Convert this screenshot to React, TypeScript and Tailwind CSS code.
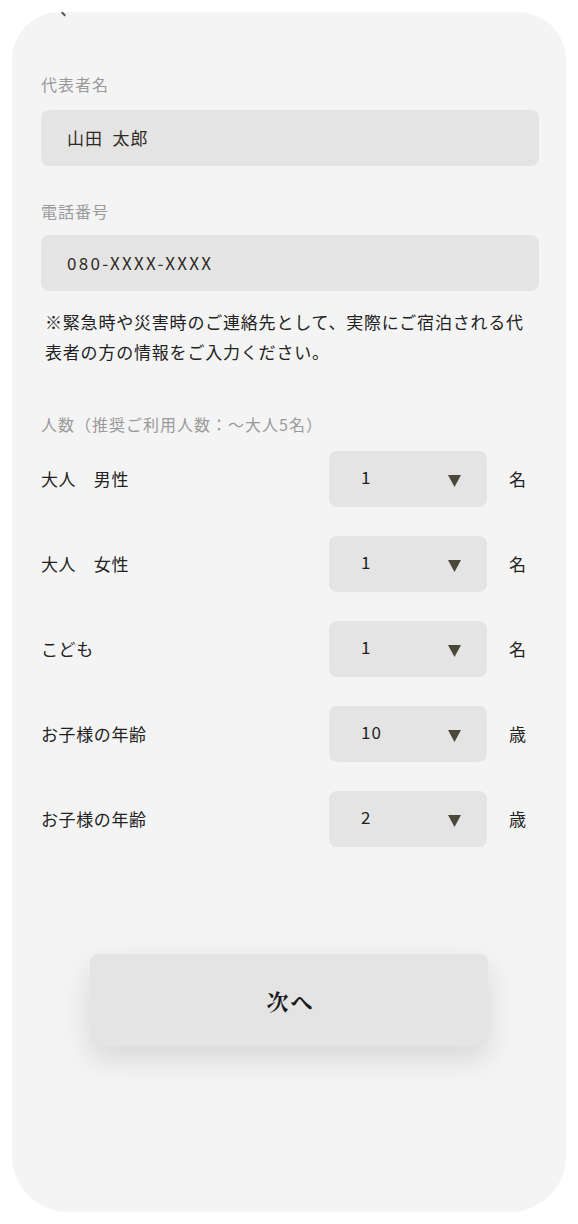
import React from 'react';

const jp = { fontFamily: '"Noto Sans CJK JP", "Noto Sans", sans-serif' };

interface CountRowProps {
  label: string;
  value: string;
  unit: string;
}

const CountRow: React.FC<CountRowProps> = ({ label, value, unit }) => (
  <div className="flex items-center">
    <div className="flex-1 text-[17px] tracking-[0.6px] text-[#222]">{label}</div>
    <div className="w-[158px] h-[56px] rounded-[8px] bg-[#e4e4e4] flex items-center pl-[32px] pr-[26px]">
      <span className="flex-1 text-[17px] text-[#222] -mt-[4px] tracking-[1px]">{value}</span>
      <svg width="13" height="12" viewBox="0 0 13 12" className="mt-[4px]">
        <polygon points="0,0 13,0 6.5,12" fill="#4a4838" />
      </svg>
    </div>
    <div className="w-[52px] pl-[22px] text-[17px] text-[#222]">{unit}</div>
  </div>
);

export default function App() {
  return (
    <div className="min-h-[1224px] bg-white pt-[12px] px-[12px] pb-[12px]" style={jp}>
      <div className="relative bg-[#f4f4f4] rounded-t-[48px] rounded-b-[56px] h-[1200px] pt-[60px] pl-[29px] pr-[27px]">
        <span className="absolute left-[49px] top-[1px] w-[5px] h-[2px] bg-[#555] rotate-45" />

        <div className="text-[16px] leading-[24px] tracking-[1px] text-[#9a9a9a]">代表者名</div>
        <div className="mt-[14px] h-[56px] rounded-[8px] bg-[#e4e4e4] flex items-center pl-[26px] text-[17px] tracking-[1px] text-[#2e2a22] whitespace-pre">
          山田  太郎
        </div>

        <div className="mt-[33px] text-[16px] leading-[24px] tracking-[1px] text-[#9a9a9a]">電話番号</div>
        <div className="mt-[12px] h-[56px] rounded-[8px] bg-[#e4e4e4] flex items-center pl-[26px] text-[17px] tracking-[2.3px] text-[#2e2a22]">
          080-XXXX-XXXX
        </div>

        <p className="mt-[16px] pl-[4px] pr-[8px] text-[17px] leading-[30px] tracking-[0.8px] text-[#222]">
          ※緊急時や災害時のご連絡先として、実際にご宿泊される代表者の方の情報をご入力ください。
        </p>

        <div className="mt-[45px] text-[16px] leading-[24px] tracking-[1px] text-[#9a9a9a]">人数（推奨ご利用人数：〜大人5名）</div>

        <div className="mt-[15px] flex flex-col gap-[29px]">
          <CountRow label="大人　男性" value="1" unit="名" />
          <CountRow label="大人　女性" value="1" unit="名" />
          <CountRow label="こども" value="1" unit="名" />
          <CountRow label="お子様の年齢" value="10" unit="歳" />
          <CountRow label="お子様の年齢" value="2" unit="歳" />
        </div>

        <div className="mt-[107px] flex justify-center pr-[3px]">
          <button
            className="w-[398px] h-[92px] rounded-[8px] bg-[#e4e4e4] shadow-[0_12px_30px_rgba(0,0,0,0.12)] text-[22px] font-bold text-[#1a1a1a] tracking-[2px] pl-[4px]"
            style={{ fontFamily: '"Noto Serif CJK JP", "Noto Sans CJK JP", serif' }}
          >
            次へ
          </button>
        </div>
      </div>
    </div>
  );
}
